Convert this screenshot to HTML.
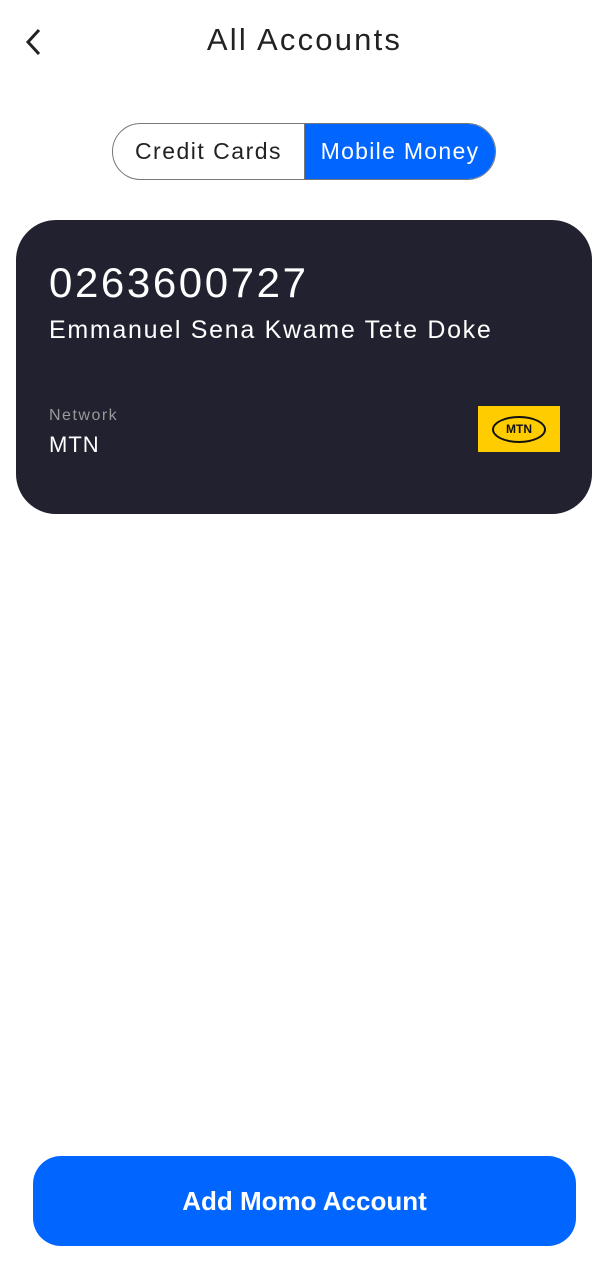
<!DOCTYPE html>
<html><head><style>
body{margin:0;width:609px;height:1280px;background:#fff;font-family:"Liberation Sans",sans-serif;position:relative;overflow:hidden}
.a{position:absolute}
</style></head><body>
<svg class="a" style="left:22px;top:27px" width="22" height="30" viewBox="0 0 22 30"><path d="M17 3 L6 15 L17 27" fill="none" stroke="#222" stroke-width="3"/></svg>
<div class="a" style="left:0;width:609px;top:22px;text-align:center;font-size:31px;color:#222;letter-spacing:2.2px">All Accounts</div>
<div class="a" style="left:112px;top:123px;width:382px;height:55px;border:1.5px solid #777;border-radius:29px;overflow:hidden;display:flex">
<div style="width:191px;text-align:center;line-height:55px;font-size:23px;color:#222;letter-spacing:1.5px">Credit Cards</div>
<div style="flex:1;background:#0066ff;text-align:center;line-height:55px;font-size:23px;color:#fff;border-left:1.5px solid #777;letter-spacing:1.3px">Mobile Money</div>
</div>
<div class="a" style="left:16px;top:220px;width:576px;height:294px;background:#21212f;border-radius:40px"></div>
<div class="a" style="left:49px;top:259px;font-size:42px;color:#fff;letter-spacing:2.6px">0263600727</div>
<div class="a" style="left:49px;top:316px;font-size:25px;color:#fff;letter-spacing:1.7px">Emmanuel Sena Kwame Tete Doke</div>
<div class="a" style="left:49px;top:407px;font-size:16px;color:#999;letter-spacing:1.5px">Network</div>
<div class="a" style="left:49px;top:432px;font-size:22px;color:#fff;letter-spacing:1px">MTN</div>
<div class="a" style="left:478px;top:406px;width:82px;height:46px;background:#ffcc00"></div>
<div class="a" style="left:492px;top:416px;width:50px;height:23px;border:2.5px solid #111;border-radius:50%;text-align:center;line-height:23px;font-size:12px;font-weight:bold;color:#111">MTN</div>
<div class="a" style="left:33px;top:1156px;width:543px;height:90px;background:#0066ff;border-radius:28px;text-align:center;line-height:90px;color:#fff;font-size:26px;font-weight:bold">Add Momo Account</div>
</body></html>
